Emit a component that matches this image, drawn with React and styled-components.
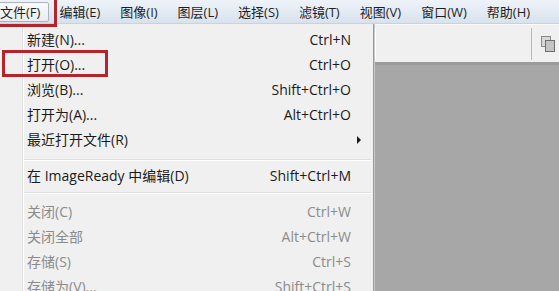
import React from "react";
import styled, { createGlobalStyle } from "styled-components";

const Global = createGlobalStyle`
  html, body { margin: 0; padding: 0; background: #a7a7a7; overflow: hidden; }
  * { box-sizing: border-box; }
`;

const FONT = `"Open Sans", "Noto Sans CJK SC", sans-serif`;

const Window = styled.div`
  position: relative;
  width: 559px;
  height: 291px;
  overflow: hidden;
  display: flex;
  flex-direction: column;
  background: #a7a7a7;
  font-family: ${FONT};
`;

const MenuBar = styled.div`
  height: 24px;
  flex: none;
  display: flex;
  align-items: center;
  margin-left: -9px;
  background: linear-gradient(#eef3f9, #d8e2ed);
  border-bottom: 1px solid #c9d3de;
`;

const MenuBarItem = styled.div`
  height: 20px;
  padding: 0 ${(p) => (p.$active ? 8 : 9)}px;
  display: flex;
  align-items: center;
  font-size: 13px;
  line-height: 20px;
  color: #1e1e1e;
  white-space: nowrap;
  border: 1px solid ${(p) => (p.$active ? "#a9b2bd" : "transparent")};
  border-radius: 2px;
  background: ${(p) => (p.$active ? "linear-gradient(#f9fafc, #e9edf2)" : "transparent")};
`;

const OptionsBar = styled.div`
  height: 41px;
  flex: none;
  display: flex;
  align-items: center;
  justify-content: flex-end;
  background: #f0f0f0;
  border-top: 1px solid #fafafa;
  border-bottom: 3px solid #9c9c9c;
  padding-right: 4px;
`;

const Field = styled.div`
  width: 158px;
  height: 32px;
  border-left: 1px solid #b9b9b9;
  border-right: 1px solid #b9b9b9;
  box-shadow: inset 1px 0 0 #ffffff;
  margin-right: 9px;
`;

const Workspace = styled.div`
  flex: 1;
  background: #a7a7a7;
`;

const Menu = styled.div`
  position: absolute;
  left: 0;
  top: 24px;
  width: 374px;
  height: 280px;
  padding-top: 3px;
  border-right: 1px solid #9a9a9a;
  box-shadow: 1px 0 0 #c8c8c8;
  background:
    linear-gradient(
      to right,
      transparent 22px,
      #e0e0e0 22px,
      #e0e0e0 23px,
      #ffffff 23px,
      #ffffff 24px,
      transparent 24px
    ),
    #f0f0f0;
`;

const Item = styled.div`
  height: 25px;
  display: grid;
  grid-template-columns: 1fr auto 22px;
  align-items: center;
  padding-left: 27px;
  font-size: 14px;
  line-height: 25px;
  white-space: nowrap;
  color: ${(p) => (p.$disabled ? "#8b8b8b" : "#1b1b1b")};
`;

const Shortcut = styled.span`
  text-align: right;
`;

const Arrow = styled.span`
  justify-self: start;
  margin-left: 6px;
  width: 0;
  height: 0;
  border-top: 4px solid transparent;
  border-bottom: 4px solid transparent;
  border-left: 4px solid #1b1b1b;
`;

const Separator = styled.div`
  height: 11px;
  margin-left: 24px;
  margin-right: 2px;
  padding-top: ${(p) => p.$line}px;
  &::after {
    content: "";
    display: block;
    height: 1px;
    background: #e0e0e0;
    box-shadow: 0 1px 0 #ffffff;
  }
`;

const Highlight = styled.div`
  position: absolute;
  border: 3px solid #b3252b;
  pointer-events: none;
`;

const menuBarItems = [
  "文件(F)",
  "编辑(E)",
  "图像(I)",
  "图层(L)",
  "选择(S)",
  "滤镜(T)",
  "视图(V)",
  "窗口(W)",
  "帮助(H)",
];

const groups = [
  [
    { label: "新建(N)...", key: "Ctrl+N" },
    { label: "打开(O)...", key: "Ctrl+O" },
    { label: "浏览(B)...", key: "Shift+Ctrl+O" },
    { label: "打开为(A)...", key: "Alt+Ctrl+O" },
    { label: "最近打开文件(R)", sub: true },
  ],
  [{ label: "在 ImageReady 中编辑(D)", key: "Shift+Ctrl+M" }],
  [
    { label: "关闭(C)", key: "Ctrl+W", disabled: true },
    { label: "关闭全部", key: "Alt+Ctrl+W", disabled: true },
    { label: "存储(S)", key: "Ctrl+S", disabled: true },
    { label: "存储为(V)...", key: "Shift+Ctrl+S", disabled: true },
  ],
];

function PaletteIcon() {
  return (
    <svg width="14" height="16" viewBox="0 0 14 16">
      <rect x="0.5" y="0.5" width="9" height="10" fill="#d8d8d8" stroke="#8a8a8a" />
      <rect x="4.5" y="4.5" width="9" height="11" fill="#c4c4c4" stroke="#6f6f6f" />
    </svg>
  );
}

export default function App() {
  return (
    <>
      <Global />
      <Window>
        <MenuBar>
          {menuBarItems.map((m, i) => (
            <MenuBarItem key={m} $active={i === 0}>
              {m}
            </MenuBarItem>
          ))}
        </MenuBar>
        <OptionsBar>
          <Field />
          <PaletteIcon />
        </OptionsBar>
        <Workspace />
        <Menu>
          {groups.map((g, gi) => (
            <React.Fragment key={gi}>
              {gi > 0 && <Separator $line={gi === 1 ? 7 : 4} />}
              {g.map((it) => (
                <Item key={it.label} $disabled={it.disabled}>
                  <span>{it.label}</span>
                  <Shortcut>{it.key || ""}</Shortcut>
                  {it.sub ? <Arrow /> : <span />}
                </Item>
              ))}
            </React.Fragment>
          ))}
        </Menu>
        <Highlight style={{ left: -3, top: -3, width: 60, height: 30 }} />
        <Highlight style={{ left: 2, top: 50, width: 106, height: 27 }} />
      </Window>
    </>
  );
}
